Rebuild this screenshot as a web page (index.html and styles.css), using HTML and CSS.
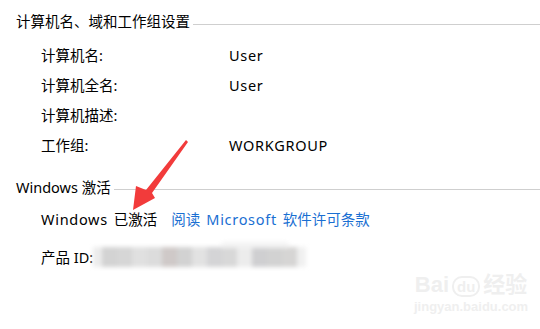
FILE: index.html
```html
<!DOCTYPE html>
<html lang="zh-CN">
<head>
    <meta charset="UTF-8">
    <title>系统</title>
    <link rel="stylesheet" href="styles.css">
</head>
<body>
    <div class="panel">
        <div class="section-head">
            <span>计算机名、域和工作组设置</span>
            <span class="rule"></span>
        </div>
        <div class="rows">
            <div class="row"><span class="label">计算机名:</span><span class="en">User</span></div>
            <div class="row"><span class="label">计算机全名:</span><span class="en">User</span></div>
            <div class="row"><span class="label">计算机描述:</span><span></span></div>
            <div class="row"><span class="label">工作组:</span><span class="en">WORKGROUP</span></div>
        </div>

        <div class="section-head second">
            <span>Windows 激活</span>
            <span class="rule"></span>
        </div>
        <div class="row activation">
            <span><span class="en">Windows </span>已激活</span>
            <a class="link" href="#">阅读<span class="en"> Microsoft </span>软件许可条款</a>
        </div>
        <div class="row product">
            <span>产品 ID:</span>
            <span class="blurred">
                <span class="edge" style="background:#ececec"></span>
                <span style="background:#d3d3d3"></span><span style="background:#d6d6d6"></span>
                <span style="background:#e0e0e0"></span><span style="background:#dcdcdc"></span>
                <span style="background:#cfc9c8"></span><span style="background:#d2d2d2"></span>
                <span style="background:#e2e2e2"></span><span style="background:#d4d4d6"></span>
                <span style="background:#d8d8d8"></span><span style="background:#ececec"></span>
                <span style="background:#cfcfd1"></span><span style="background:#d2d2d2"></span>
                <span style="background:#d6d5d4"></span>
                <span class="edge" style="background:#f0f0f0"></span>
                <span class="bump"></span>
            </span>
        </div>
    </div>

    <!-- red annotation arrow -->
    <svg class="arrow" width="540" height="329" viewBox="0 0 540 329">
        <polygon points="186,140 188,142 152,193 155,198 133,210 136,186 146,190" fill="#f23b3b"/>
    </svg>

    <div class="watermark">
        <div class="wm-logo">Bai<span class="wm-du">du</span>经验</div>
        <div class="wm-url">jingyan.baidu.com</div>
    </div>
</body>
</html>
```

FILE: styles.css
```css
body {
    margin: 0;
    background: #fff;
    font-family: "Noto Sans", "Noto Sans CJK SC", sans-serif;
    font-size: 14.5px;
    color: #000;
}
.panel {
    padding: 11px 0 0 16px;
}
.section-head {
    display: flex;
    align-items: center;
    height: 20px;
    line-height: 20px;
}
.section-head .rule {
    flex: 1;
    margin: 6px 0 0 3px;
    border-top: 1px solid #cfcfcf;
}
.section-head.second {
    margin-top: 17px;
}
.rows {
    margin-top: 8.5px;
}
.row {
    display: flex;
    height: 30px;
    line-height: 30px;
    padding-left: 25px;
    white-space: nowrap;
}
.label {
    width: 188px;
}
.en {
    letter-spacing: 0.7px;
    word-spacing: 1.5px;
}
.activation {
    margin-top: 7px;
}
.link {
    margin-left: 14px;
    color: #1a6fd2;
    text-decoration: none;
}
.product {
    margin-top: 8px;
}
.blurred {
    position: relative;
    display: flex;
    align-items: center;
    filter: blur(2px);
}
.blurred span {
    width: 15px;
    height: 20px;
}
.blurred .edge {
    width: 9px;
}
.blurred .bump {
    position: absolute;
    left: 128px;
    top: 0;
    width: 68px;
    height: 6px;
    background: #f3f3f3;
    border-radius: 4px 4px 0 0;
}
.arrow {
    position: absolute;
    left: 0;
    top: 0;
}
.watermark {
    position: absolute;
    left: 414px;
    top: 272px;
    color: #efefef;
    text-align: center;
}
.wm-logo {
    font-family: "Liberation Sans", "Noto Sans CJK SC", sans-serif;
    font-size: 22px;
    font-weight: bold;
    line-height: 26px;
}
.wm-du {
    display: inline-block;
    margin: 0 3px;
    padding: 0 3px;
    border: 2px solid #efefef;
    border-radius: 10px;
    font-size: 15px;
    line-height: 17px;
}
.wm-url {
    font-family: "Liberation Sans", sans-serif;
    font-size: 13px;
    font-weight: bold;
    line-height: 18px;
}
```
